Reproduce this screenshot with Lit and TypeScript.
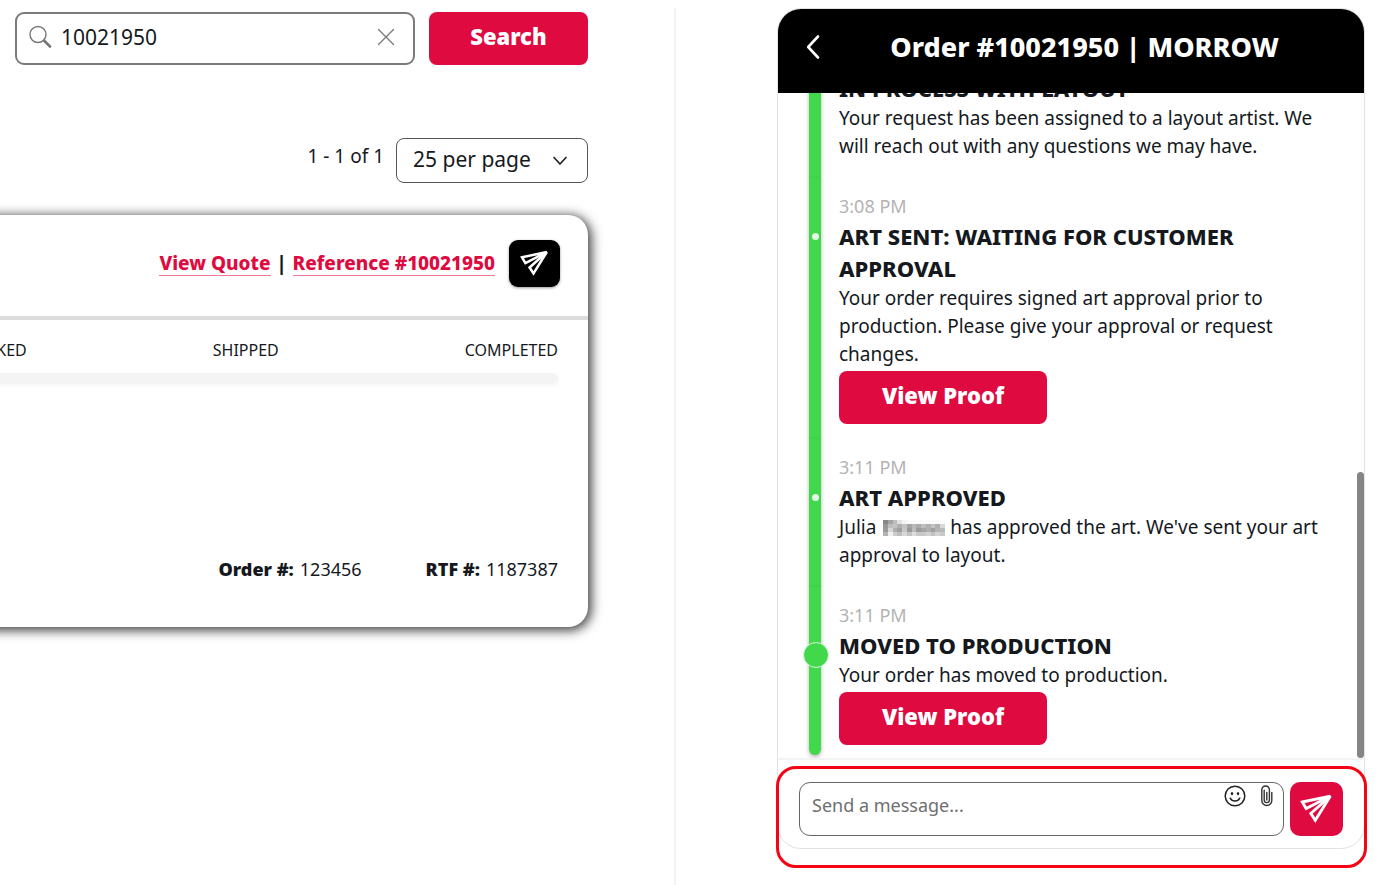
import { LitElement, html, svg, css, nothing } from "lit";
import { customElement, property } from "lit/decorators.js";
import { classMap } from "lit/directives/class-map.js";

const planeIcon = html`<svg class="plane" viewBox="0 0 32 28" aria-hidden="true" fill="none" stroke="#fff" stroke-width="2.7" stroke-linejoin="miter" stroke-miterlimit="3">
  <path d="M2.200 7.400 28.600 1.800 5.800 13.600Z" />
  <path d="M28.600 1.800 14.400 24.600 10.200 18.200Z" />
</svg>`;

/* Grey levels of the mosaic that hides the customer's surname. */
const MOSAIC = [
  [135, 165, 190, 225, 245, 250, 250, 250, 250, 250, 250, 250, 250],
  [150, 190, 195, 175, 195, 165, 185, 170, 190, 175, 195, 175, 215],
  [155, 215, 175, 160, 200, 155, 190, 155, 165, 175, 160, 180, 185],
  [180, 240, 205, 190, 215, 195, 220, 200, 200, 210, 195, 210, 200],
];

const redacted = html`<svg class="redacted" viewBox="0 0 13 4" preserveAspectRatio="none" role="img" aria-label="Name hidden" shape-rendering="crispEdges">
  ${MOSAIC.map((row, y) => row.map((g, x) => svg`<rect x=${x} y=${y} width="1" height="1" fill="rgb(${g},${g},${g})"></rect>`))}
</svg>`;

interface Entry {
  time: string;
  title: string;
  body: unknown;
  proof?: boolean;
  current?: boolean;
}

const ENTRIES: Entry[] = [
  {
    time: "3:06 PM",
    title: "IN PROCESS WITH LAYOUT",
    body: "Your request has been assigned to a layout artist. We will reach out with any questions we may have.",
  },
  {
    time: "3:08 PM",
    title: "ART SENT: WAITING FOR CUSTOMER APPROVAL",
    body: "Your order requires signed art approval prior to production. Please give your approval or request changes.",
    proof: true,
  },
  {
    time: "3:11 PM",
    title: "ART APPROVED",
    body: html`Julia ${redacted} has approved the art. We've sent your art approval to layout.`,
  },
  {
    time: "3:11 PM",
    title: "MOVED TO PRODUCTION",
    body: "Your order has moved to production.",
    proof: true,
    current: true,
  },
];

const base = css`
  * {
    box-sizing: border-box;
  }
  button,
  input,
  select,
  textarea {
    font: inherit;
    color: inherit;
    margin: 0;
  }
  button {
    cursor: pointer;
    border: 0;
    padding: 0;
  }
  svg {
    display: block;
    flex: none;
  }
  .primary {
    height: 53px;
    padding-bottom: 5px;
    border-radius: 8px;
    background: #de0a40;
    color: #fff;
    font-size: 22px;
    font-weight: 900;
  }
`;

@customElement("order-card")
export class OrderCard extends LitElement {
  static styles = [
    base,
    css`
      :host {
        display: block;
        border-radius: 20px;
        background: #fff;
        box-shadow: 2px 2px 12px 1px rgba(0, 0, 0, 0.8);
      }
      .head {
        display: flex;
        align-items: center;
        justify-content: flex-end;
        height: 105px;
        padding: 0 28px 4px 0;
        border-bottom: 4px solid #dcdcdc;
        font-size: 19px;
        font-weight: 800;
        line-height: 23px;
      }
      .links {
        display: flex;
        gap: 6px;
        margin-right: 14px;
        white-space: nowrap;
      }
      a {
        color: #de0a40;
        text-decoration: none;
        border-bottom: 1px solid #ee7a97;
      }
      .chat {
        display: grid;
        place-items: center;
        width: 51px;
        height: 47px;
        border-radius: 9px;
        background: #000;
        box-shadow: 0 1px 3px rgba(0, 0, 0, 0.4);
      }
      .plane {
        width: 30px;
        height: 27px;
      }
      .body {
        padding: 18px 30px 44px;
      }
      .steps {
        display: flex;
        justify-content: flex-end;
        gap: 186px;
        margin: 0;
        padding: 0;
        list-style: none;
        font-size: 16px;
        line-height: 24px;
      }
      .track {
        height: 10px;
        margin-top: 11px;
        border-radius: 5px;
        background: #f4f4f4;
        box-shadow: 0 2px 4px rgba(0, 0, 0, 0.06);
      }
      .facts {
        display: flex;
        justify-content: flex-end;
        gap: 64px;
        margin: 172px 0 0;
        font-size: 18px;
        line-height: 28px;
      }
      .facts div {
        display: flex;
        gap: 6px;
      }
      dt {
        font-weight: 900;
      }
      dd {
        margin: 0;
      }
    `,
  ];

  render() {
    return html`
      <div class="head">
        <div class="links">
          <a href="#quote">View Quote</a><span>|</span><a href="#reference">Reference #10021950</a>
        </div>
        <button class="chat" aria-label="Message about this order">${planeIcon}</button>
      </div>
      <div class="body">
        <ol class="steps">
          <li>BOOKED</li>
          <li>SHIPPED</li>
          <li>COMPLETED</li>
        </ol>
        <div class="track"></div>
        <dl class="facts">
          <div><dt>Order #:</dt><dd>123456</dd></div>
          <div><dt>RTF #:</dt><dd>1187387</dd></div>
        </dl>
      </div>
    `;
  }
}

@customElement("timeline-entry")
export class TimelineEntry extends LitElement {
  @property({ attribute: false }) entry!: Entry;

  static styles = [
    base,
    css`
      :host {
        display: block;
        flex: none;
      }
      .entry {
        display: grid;
        grid-template-columns: 12px 1fr;
        column-gap: 18px;
      }
      .rail {
        position: relative;
        background: #41d84b;
        box-shadow: 0 2px 4px rgba(0, 0, 0, 0.3);
      }
      .rail::after {
        content: "";
        position: absolute;
        top: 55px;
        left: 3px;
        width: 7px;
        height: 7px;
        border-radius: 50%;
        background: #e4fbe5;
      }
      .current .rail {
        border-radius: 0 0 6px 6px;
      }
      .current .rail::after {
        left: -6px;
        width: 24px;
        height: 24px;
        border: 1px solid #d9f7db;
        background: #41d84b;
      }
      .content {
        padding: 14px 0 18px;
        font-size: 19px;
        line-height: 28px;
      }
      .action .content {
        padding-bottom: 15px;
      }
      .current .content {
        padding-bottom: 10px;
      }
      time {
        display: block;
        color: #b3b3b3;
        font-size: 18px;
      }
      h3 {
        margin: 0;
        font-size: 22px;
        font-weight: 800;
        line-height: 32px;
      }
      p {
        margin: 0;
      }
      .primary {
        display: block;
        width: 208px;
        margin-top: 3px;
      }
      .redacted {
        display: inline-block;
        width: 62px;
        height: 16px;
        margin-left: 2px;
        vertical-align: -2px;
      }
    `,
  ];

  render() {
    const e = this.entry;
    return html`
      <article class=${classMap({ entry: true, action: !!e.proof, current: !!e.current })}>
        <div class="rail"></div>
        <div class="content">
          <time>${e.time}</time>
          <h3>${e.title}</h3>
          <p>${e.body}</p>
          ${e.proof ? html`<button class="primary">View Proof</button>` : nothing}
        </div>
      </article>
    `;
  }
}

@customElement("chat-panel")
export class ChatPanel extends LitElement {
  static styles = [
    base,
    css`
      :host {
        display: flex;
        flex-direction: column;
        border: 1px solid #e2e2e2;
        border-radius: 24px;
        background: #fff;
      }
      header {
        display: flex;
        align-items: center;
        flex: none;
        height: 84px;
        padding: 0 16px 8px 28px;
        border-radius: 23px 23px 0 0;
        background: #000;
        color: #fff;
      }
      .back {
        background: none;
      }
      h2 {
        flex: 1;
        margin: 0;
        text-align: center;
        font-size: 27px;
        font-weight: 800;
        line-height: 36px;
      }
      .history {
        position: relative;
        display: flex;
        flex: 1;
        flex-direction: column;
        justify-content: flex-end;
        min-height: 0;
        overflow: hidden;
        padding: 0 38px 3px 31px;
      }
      .thumb {
        position: absolute;
        right: 0;
        bottom: 0;
        width: 7px;
        height: 43%;
        border-radius: 4px;
        background: #858585;
      }
      .composer {
        position: relative;
        display: flex;
        flex: none;
        gap: 6px;
        padding: 22px 21px 12px;
        border-top: 2px solid #f3f3f3;
      }
      .composer::after {
        content: "";
        position: absolute;
        inset: 6px -3px -20px -2px;
        border: 3px solid #f50514;
        border-radius: 20px;
        pointer-events: none;
      }
      .field {
        display: flex;
        flex: 1;
        height: 54px;
        padding: 0 10px 0 12px;
        border: 1px solid #666;
        border-radius: 11px;
      }
      textarea {
        flex: 1;
        min-width: 0;
        height: 48px;
        padding: 8px 0 0;
        border: 0;
        outline: 0;
        resize: none;
        background: none;
        font-size: 18px;
        line-height: 28px;
      }
      textarea::placeholder {
        color: #6f6f6f;
        opacity: 1;
      }
      .tools {
        display: flex;
        align-items: flex-start;
        gap: 14px;
        padding-top: 2px;
      }
      .tools button {
        background: none;
      }
      .send {
        display: grid;
        place-items: center;
        width: 53px;
        height: 54px;
        border-radius: 10px;
        background: #de0a40;
      }
      .plane {
        width: 34px;
        height: 30px;
      }
    `,
  ];

  render() {
    return html`
      <header>
        <button class="back" aria-label="Back">
          <svg width="15" height="26" viewBox="0 0 15 26" fill="none" stroke="#fff" stroke-width="2.6" stroke-linecap="round" stroke-linejoin="round"><path d="M12 2.500 2.200 13l9.800 10.500" /></svg>
        </button>
        <h2>Order #10021950 | MORROW</h2>
      </header>
      <div class="history">
        ${ENTRIES.map((e) => html`<timeline-entry .entry=${e}></timeline-entry>`)}
        <div class="thumb"></div>
      </div>
      <div class="composer">
        <div class="field">
          <textarea aria-label="Message" placeholder="Send a message..."></textarea>
          <div class="tools">
            <button aria-label="Add emoji">
              <svg width="22" height="22" viewBox="0 0 22 22" fill="none" stroke="#222" stroke-width="1.5" stroke-linecap="round">
                <circle cx="11" cy="11" r="9.8" />
                <path d="M6.2 13.2c1 1.9 2.8 2.9 4.8 2.9s3.8-1 4.8-2.9" />
                <ellipse cx="8" cy="8.6" rx="1.2" ry="1.6" fill="#222" stroke="none" />
                <ellipse cx="14" cy="8.6" rx="1.2" ry="1.6" fill="#222" stroke="none" />
              </svg>
            </button>
            <button aria-label="Attach file">
              <svg width="13" height="22" viewBox="0 0 13 22" fill="none" stroke="#333" stroke-width="1.4" stroke-linecap="round">
                <path d="M9.4 5.5V15a2.6 2.6 0 0 1-5.2 0V5.2M11.800 7.5V15.5a5 5 0 0 1-10 0V4.8a3.8 3.8 0 0 1 7.6 0V6M6.8 7.5V15" />
              </svg>
            </button>
          </div>
        </div>
        <button class="send" aria-label="Send">${planeIcon}</button>
      </div>
    `;
  }
}

@customElement("app-root")
export class AppRoot extends LitElement {
  static styles = [
    base,
    css`
      :host {
        display: grid;
        grid-template-columns: 676fr 711fr;
        height: 100vh;
        min-height: 600px;
        overflow: hidden;
        background: #fff;
        color: #15191d;
        font-family: "Noto Sans", "Open Sans", sans-serif;
        font-size: 19px;
      }
      .orders {
        min-width: 0;
        margin-top: 8px;
        padding: 4px 86px 0 15px;
        border-right: 2px solid #f3f3f3;
      }
      .search {
        display: flex;
        gap: 14px;
      }
      .box {
        display: flex;
        flex: 1;
        align-items: center;
        height: 53px;
        min-width: 0;
        padding: 0 18px 4px 12px;
        border: 2px solid #7b7b7b;
        border-radius: 9px;
      }
      .box input {
        flex: 1;
        min-width: 0;
        padding: 0 0 0 9px;
        border: 0;
        outline: 0;
        background: none;
        font-size: 21px;
        line-height: 32px;
      }
      .box button {
        background: none;
      }
      .search .primary {
        width: 159px;
      }
      .pager {
        display: flex;
        align-items: center;
        justify-content: flex-end;
        gap: 12px;
        margin-top: 73px;
      }
      .count {
        padding-bottom: 10px;
      }
      .size {
        display: grid;
        align-items: center;
        width: 192px;
      }
      .size > * {
        grid-area: 1 / 1;
      }
      .size svg {
        justify-self: end;
        margin-right: 20px;
        pointer-events: none;
      }
      select {
        appearance: none;
        width: 100%;
        height: 45px;
        padding: 0 40px 3px 16px;
        border: 1px solid #555;
        border-radius: 8px;
        background: #fff;
        font-size: 21px;
      }
      order-card {
        margin: 32px 0 0 -55px;
      }
      chat-panel {
        height: calc(100vh - 44px);
        margin: 8px 22px 0 101px;
      }
    `,
  ];

  render() {
    return html`
      <main class="orders">
        <form class="search" @submit=${(e: Event) => e.preventDefault()}>
          <div class="box">
            <svg width="23" height="24" viewBox="0 0 23 24" fill="none" stroke="#777"><circle cx="9" cy="9.5" r="8" stroke-width="1.4" /><path d="m15 15.500 6 6" stroke-width="2.6" stroke-linecap="round" /></svg>
            <input type="text" aria-label="Search orders" value="10021950" />
            <button type="button" aria-label="Clear search">
              <svg width="18" height="18" viewBox="0 0 18 18" fill="none" stroke="#777" stroke-width="1.3" stroke-linecap="round"><path d="m1.500 1.500 15 15m0-15-15 15" /></svg>
            </button>
          </div>
          <button class="primary" type="submit">Search</button>
        </form>
        <div class="pager">
          <span class="count">1 - 1 of 1</span>
          <div class="size">
            <select aria-label="Results per page">
              <option>25 per page</option>
            </select>
            <svg width="16" height="10" viewBox="0 0 16 10" fill="none" stroke="#222" stroke-width="1.7" stroke-linecap="round" stroke-linejoin="round"><path d="m2 1.500 6 6.500 6-6.500" /></svg>
          </div>
        </div>
        <order-card></order-card>
      </main>
      <chat-panel></chat-panel>
    `;
  }
}
